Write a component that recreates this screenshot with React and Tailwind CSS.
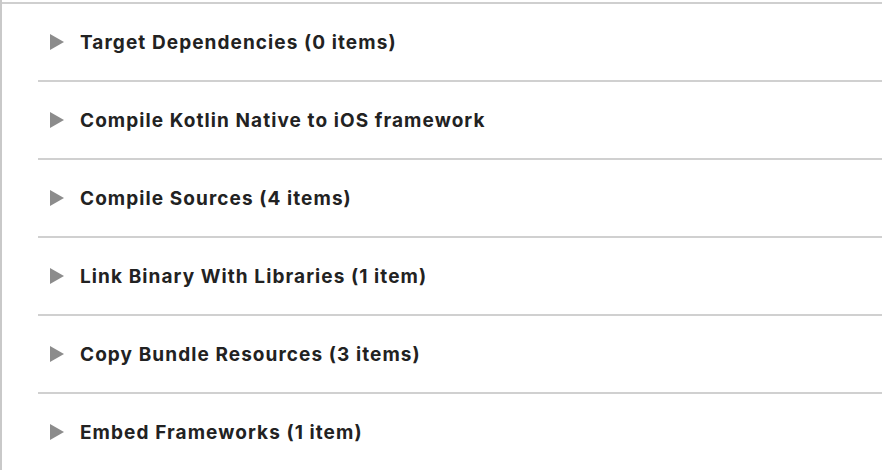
import React from 'react';

const phases = [
  'Target Dependencies (0 items)',
  'Compile Kotlin Native to iOS framework',
  'Compile Sources (4 items)',
  'Link Binary With Libraries (1 item)',
  'Copy Bundle Resources (3 items)',
  'Embed Frameworks (1 item)'
];

function Disclosure() {
  return (
    <svg width="14" height="16" viewBox="0 0 14 16" className="shrink-0">
      <polygon points="0,0 14,8 0,16" fill="#8c8c8c" />
    </svg>
  );
}

export default function App() {
  return (
    <div className="w-[882px] h-[470px] bg-white overflow-hidden border-l-2 border-[#c9c9c9] pt-[2px] font-['Inter','Liberation_Sans',sans-serif]">
      <div className="border-t-2 border-[#cfcfcf]">
        {phases.map((label, i) => (
          <div key={i}>
            {i > 0 && <div className="ml-[36px] h-[2px] bg-[#d0d0d0]" />}
            <div className="h-[76px] flex items-center pl-[48px] gap-4">
              <Disclosure />
              <span className="text-[19px] leading-none font-bold text-[#222222] tracking-[1.08px]">{label}</span>
            </div>
          </div>
        ))}
      </div>
    </div>
  );
}
